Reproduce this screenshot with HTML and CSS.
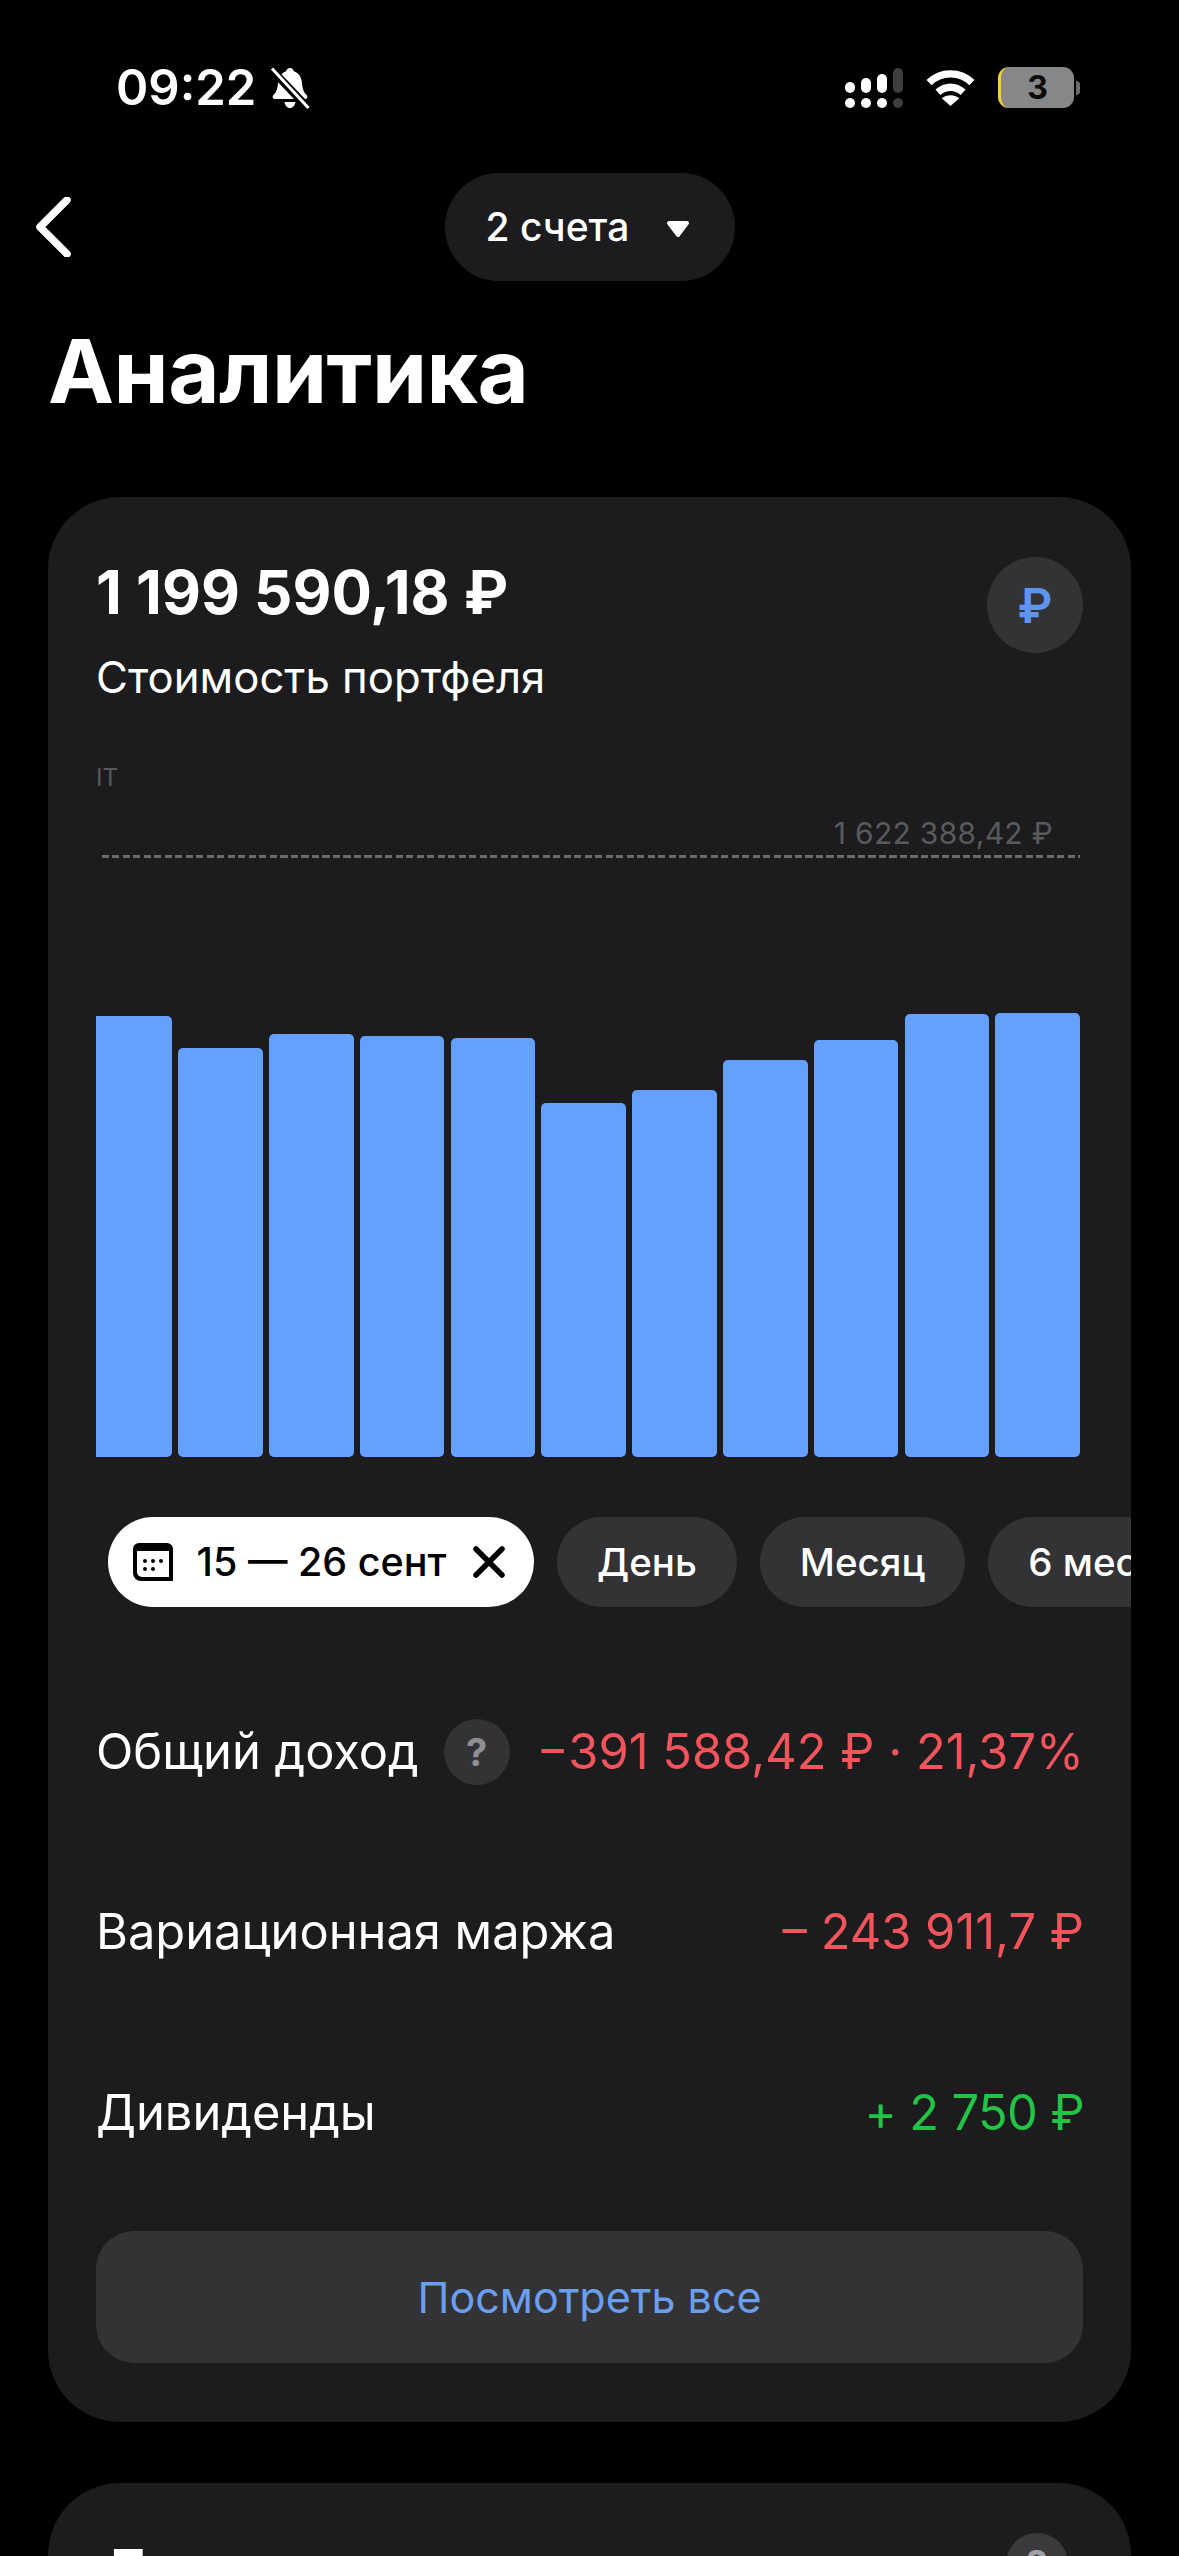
FILE: index.html
```html
<!DOCTYPE html>
<html lang="ru">
<head>
  <meta charset="utf-8">
  <title>Аналитика</title>
  <link rel="stylesheet" href="styles.css">
</head>
<body>
  <div class="screen">
    <div class="status-bar">
      <div class="status-left">
        <span class="time">09:22</span>
        <svg class="bell" viewBox="0 0 40 42" width="40" height="42">
          <path d="M20 1c-2 0-3.500 1.500-3.800 3.200C11 6 8.500 10 8 16c-.4 5.500-1.500 9-4.500 12-1.500 1.500-1 4 1.500 4h30c2.500 0 3-2.500 1.500-4-3-3-4.100-6.500-4.500-12-.5-6-3-10-8.200-11.800C23.500 2.500 22 1 20 1zM14.500 35c.6 3.500 2.700 6 5.500 6s4.900-2.500 5.500-6z" fill="#fff"/>
          <path d="M1 2l37 39" stroke="#000" stroke-width="8"/>
          <path d="M2 1.500l36.500 39.500" stroke="#fff" stroke-width="3" fill="none"/>
        </svg>
      </div>
      <div class="status-right">
        <svg class="signal" viewBox="0 0 58 40" width="58" height="40">
          <rect x="0" y="14" width="10" height="11" rx="5" fill="#fff"/>
          <rect x="16" y="10" width="10" height="15" rx="5" fill="#fff"/>
          <rect x="32" y="6" width="10" height="19" rx="5" fill="#fff"/>
          <rect x="48" y="0" width="10" height="25" rx="5" fill="#3d3d3d"/>
          <rect x="0" y="30" width="10" height="10" rx="5" fill="#fff"/>
          <rect x="16" y="30" width="10" height="10" rx="5" fill="#fff"/>
          <rect x="32" y="30" width="10" height="10" rx="5" fill="#fff"/>
          <rect x="48" y="30" width="10" height="10" rx="5" fill="#3d3d3d"/>
        </svg>
        <svg class="wifi" viewBox="0 0 50 38" width="49" height="37">
          <path d="M3 14C15 2 35 2 47 14" stroke="#fff" stroke-width="7.500" fill="none"/>
          <path d="M12 24c8-7 18-7 26 0" stroke="#fff" stroke-width="7.500" fill="none"/>
          <path d="M25 38l-9-8c5-4 13-4 18 0z" fill="#fff"/>
        </svg>
        <div class="battery">
          <div class="battery-body"><span class="battery-num">3</span></div>
          <div class="battery-cap"></div>
        </div>
      </div>
    </div>

    <div class="top-nav">
      <svg class="back" viewBox="0 0 36 60" width="36" height="60">
        <path d="M32 3L5 30l27 27" stroke="#fff" stroke-width="7.500" stroke-linecap="round" stroke-linejoin="round" fill="none"/>
      </svg>
      <div class="account-pill">
        <span>2 счета</span>
        <svg class="caret" viewBox="0 0 24 18" width="24" height="18">
          <path d="M3 3h18l-9 12z" fill="#fff" stroke="#fff" stroke-width="4" stroke-linejoin="round"/>
        </svg>
      </div>
    </div>

    <h1 class="page-title">Аналитика</h1>

    <section class="card">
      <div class="card-head">
        <div>
          <div class="amount">1 199 590,18 ₽</div>
          <div class="amount-label">Стоимость портфеля</div>
        </div>
        <div class="currency-badge">₽</div>
      </div>

      <div class="chart">
        <div class="chart-name">IT</div>
        <div class="chart-max">1 622 388,42 ₽</div>
        <div class="chart-line"></div>
        <div class="bars">
          <div class="bar bar-first" style="height: 441px"></div>
          <div class="bar" style="height: 409px"></div>
          <div class="bar" style="height: 423px"></div>
          <div class="bar" style="height: 421px"></div>
          <div class="bar" style="height: 419px"></div>
          <div class="bar" style="height: 354px"></div>
          <div class="bar" style="height: 367px"></div>
          <div class="bar" style="height: 397px"></div>
          <div class="bar" style="height: 417px"></div>
          <div class="bar" style="height: 443px"></div>
          <div class="bar" style="height: 444px"></div>
        </div>
      </div>

      <div class="chips">
        <div class="chip chip-active">
          <svg class="cal" viewBox="0 0 40 38" width="40" height="38">
            <path d="M6 0h28a6 6 0 0 1 6 6v32H8a8 8 0 0 1-8-8V6a6 6 0 0 1 6-6z" fill="#000"/>
            <path d="M4 8h32v26H9a5 5 0 0 1-5-5z" fill="#fff"/>
            <circle cx="12" cy="18" r="2" fill="#000"/>
            <circle cx="20" cy="18" r="2" fill="#000"/>
            <circle cx="28" cy="18" r="2" fill="#000"/>
            <circle cx="12" cy="26" r="2" fill="#000"/>
            <circle cx="20" cy="26" r="2" fill="#000"/>
          </svg>
          <span class="chip-text">15 — 26 сент</span>
          <svg class="close" viewBox="0 0 32 32" width="32" height="32">
            <path d="M3 3l26 26M29 3L3 29" stroke="#000" stroke-width="5.500" stroke-linecap="round" fill="none"/>
          </svg>
        </div>
        <div class="chip">День</div>
        <div class="chip">Месяц</div>
        <div class="chip">6 месяцев</div>
      </div>

      <div class="rows">
        <div class="row">
          <div class="row-label">
            <span>Общий доход</span>
            <span class="help">?</span>
          </div>
          <span class="val-red">−391 588,42 ₽ · 21,37%</span>
        </div>
        <div class="row">
          <span>Вариационная маржа</span>
          <span class="val-red">– 243 911,7 ₽</span>
        </div>
        <div class="row">
          <span>Дивиденды</span>
          <span class="val-green">+ 2 750 ₽</span>
        </div>
      </div>

      <div class="see-all">Посмотреть все</div>
    </section>

    <section class="card card-next">
      <div class="next-title">Будущие выплаты</div>
      <div class="next-badge">?</div>
    </section>
  </div>
</body>
</html>
```

FILE: styles.css
```css
* {
  box-sizing: border-box;
}

html, body {
  margin: 0;
  padding: 0;
  background-color: #000;
}

body {
  font-family: Inter, "Noto Sans", sans-serif;
  color: #fff;
}

.screen {
  width: 1179px;
  height: 2556px;
  overflow: hidden;
}

/* status bar */
.status-bar {
  height: 173px;
  display: flex;
  justify-content: space-between;
  align-items: flex-start;
  padding: 64px 99px 0 116px;
}

.status-left {
  display: flex;
  align-items: center;
  gap: 14px;
}

.time {
  font-size: 49px;
  font-weight: 600;
  line-height: 48px;
}

.status-right {
  display: flex;
  align-items: center;
  gap: 23px;
  margin-top: 3px;
}

.battery {
  display: flex;
  align-items: center;
  gap: 2px;
}

.battery-body {
  width: 76px;
  height: 41px;
  border-radius: 11px;
  background-color: #878787;
  border-left: 3px solid #f2cf3c;
  display: flex;
  align-items: center;
  justify-content: center;
}

.battery-num {
  color: #0c0c0c;
  font-size: 32px;
  font-weight: 700;
}

.battery-cap {
  width: 4px;
  height: 14px;
  background-color: #6a6a6a;
  border-radius: 0 7px 7px 0;
}

/* top nav */
.top-nav {
  height: 108px;
  display: flex;
  align-items: center;
  position: relative;
  justify-content: center;
}

.back {
  position: absolute;
  left: 35px;
  top: 24px;
}

.account-pill {
  width: 290px;
  height: 108px;
  border-radius: 54px;
  background-color: #1c1c1e;
  display: flex;
  align-items: center;
  gap: 37px;
  padding: 0 0 2px 41px;
  font-size: 39px;
  font-weight: 500;
}

.caret {
  margin-top: 6px;
}

.page-title {
  margin: 39px 0 0 48px;
  font-size: 88.500px;
  font-weight: 700;
  line-height: 102px;
  height: 177px;
  letter-spacing: -0.5px;
}

/* cards */
.card {
  width: 1083px;
  margin-left: 48px;
  background-color: #1c1c1e;
  border-radius: 72px;
  padding: 60px 48px 59px 48px;
}

.card-head {
  display: flex;
  justify-content: space-between;
  align-items: flex-start;
}

.amount {
  font-size: 60px;
  font-weight: 700;
  line-height: 72px;
  margin-top: -1px;
}

.amount-label {
  font-size: 43.700px;
  line-height: 52px;
  margin-top: 24px;
}

.currency-badge {
  width: 96px;
  height: 96px;
  border-radius: 50%;
  background-color: #333336;
  color: #5f94ee;
  font-size: 48px;
  font-weight: 600;
  display: flex;
  align-items: center;
  justify-content: center;
}

/* chart */
.chart {
  height: 752.500px;
  display: flex;
  flex-direction: column;
  justify-content: flex-end;
  position: relative;
}

.chart-name {
  position: absolute;
  left: 0;
  top: 59px;
  font-size: 24px;
  color: #58585a;
  line-height: 30px;
}

.chart-max {
  position: absolute;
  right: 30px;
  top: 111px;
  font-size: 30px;
  color: #5a5a5c;
  line-height: 36px;
  letter-spacing: 0.3px;
}

.chart-line {
  position: absolute;
  left: 6px;
  right: 3px;
  top: 151px;
  height: 3px;
  background-image: repeating-linear-gradient(to right, #6a6a6c 0, #6a6a6c 7px, transparent 7px, transparent 10.500px);
}

.bars {
  display: flex;
  align-items: flex-end;
  gap: 6.3px;
}

.bar {
  width: 84.500px;
  background-color: #64a0ff;
  border-radius: 5px;
}

.bar-first {
  width: 76px;
  border-radius: 0 5px 5px 0;
}

/* period chips */
.chips {
  display: flex;
  gap: 23px;
  margin: 60px -48px 0 12px;
  overflow: hidden;
}

.chip {
  height: 90px;
  flex: none;
  border-radius: 45px;
  background-color: #333336;
  padding: 0 40px;
  font-size: 38.500px;
  font-weight: 500;
  display: flex;
  align-items: center;
  white-space: nowrap;
}

.chip-active {
  width: 426px;
  background-color: #fff;
  color: #000;
  padding: 0 29px 0 25px;
  justify-content: space-between;
}

.chip-text {
  font-size: 39.500px;
  margin-right: 3px;
}

/* value rows */
.rows {
  margin: 55px -1px 0 0;
}

.row {
  height: 180.300px;
  display: flex;
  justify-content: space-between;
  align-items: center;
  font-size: 48.800px;
}

.row-label {
  display: flex;
  align-items: center;
  gap: 25px;
}

.help {
  width: 66px;
  height: 66px;
  border-radius: 50%;
  background-color: #333336;
  color: #8e8e93;
  font-size: 38px;
  font-weight: 700;
  display: flex;
  align-items: center;
  justify-content: center;
}

.val-red {
  color: #f2545b;
}

.val-green {
  color: #22c445;
  letter-spacing: -0.6px;
}

.see-all {
  height: 132px;
  margin-top: 29px;
  border-radius: 38px;
  background-color: #333336;
  color: #6a9ff0;
  font-size: 43px;
  display: flex;
  align-items: center;
  justify-content: center;
}

.card-next {
  margin-top: 61px;
  height: 300px;
  position: relative;
}

.next-title {
  font-size: 60px;
  font-weight: 700;
  line-height: 72px;
  margin: -8px 0 0 14px;
}

.next-badge {
  position: absolute;
  top: 50px;
  right: 63px;
  width: 62px;
  height: 62px;
  border-radius: 50%;
  background-color: #3a3a3c;
  color: #a0a0a6;
  font-size: 38px;
  font-weight: 700;
  display: flex;
  align-items: center;
  justify-content: center;
}
```
